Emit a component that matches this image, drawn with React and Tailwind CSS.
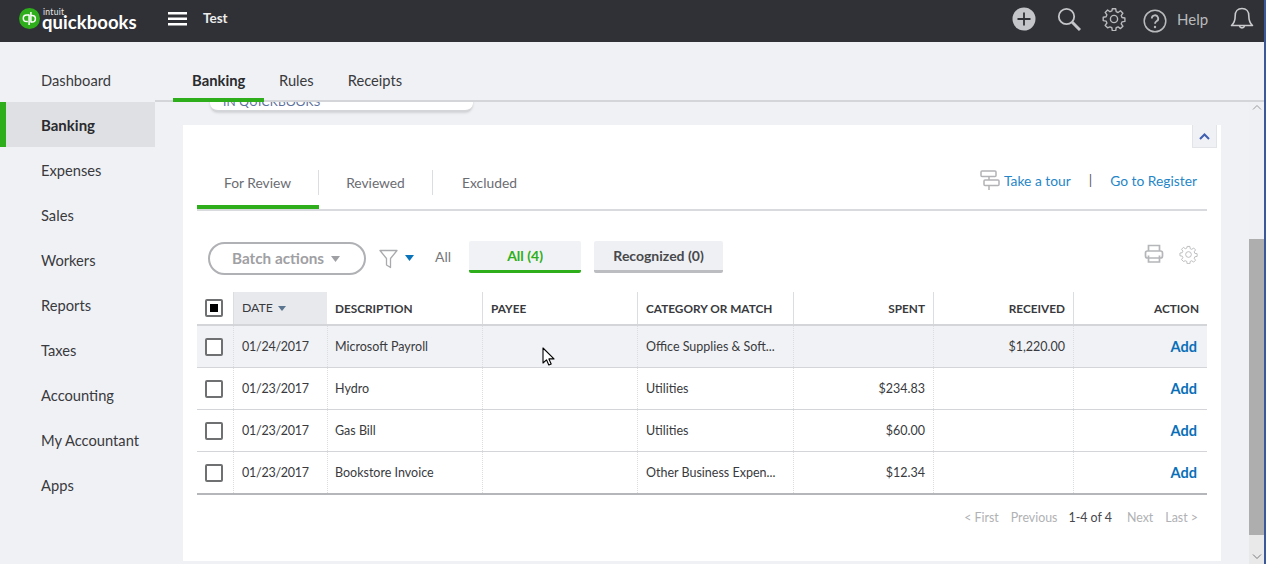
import React from "react";

const font = { fontFamily: "Lato, 'Open Sans', sans-serif" };
const cols = "grid grid-cols-[36px_94px_155px_155px_156px_140px_140px_134px]";
const navItems = ["Dashboard", "Banking", "Expenses", "Sales", "Workers", "Reports", "Taxes", "Accounting", "My Accountant", "Apps"];
const rows = [
  { date: "01/24/2017", desc: "Microsoft Payroll", cat: "Office Supplies & Soft...", spent: "", rec: "$1,220.00", hover: true },
  { date: "01/23/2017", desc: "Hydro", cat: "Utilities", spent: "$234.83", rec: "" },
  { date: "01/23/2017", desc: "Gas Bill", cat: "Utilities", spent: "$60.00", rec: "" },
  { date: "01/23/2017", desc: "Bookstore Invoice", cat: "Other Business Expen...", spent: "$12.34", rec: "" },
];

function Gear({ size = 24, color = "#b9babc", sw = 1.6 }) {
  return (
    <svg width={size} height={size} viewBox="0 0 24 24" fill="none" stroke={color} strokeWidth={sw} strokeLinejoin="round">
      <path d="M10.3 2h3.4l.5 2.9 1.9.8 2.4-1.7 2.4 2.4-1.7 2.4.8 1.9 2.9.5v3.4l-2.9.5-.8 1.9 1.7 2.4-2.4 2.4-2.4-1.7-1.9.8-.5 2.9h-3.4l-.5-2.9-1.9-.8L5.600 21l-2.400-2.400 1.700-2.400-.8-1.900L1.200 13.800v-3.400l2.900-.5.8-1.900L3.200 5.600l2.400-2.400 2.400 1.700 1.900-.8z" transform="translate(0 -.2)" />
      <circle cx="12" cy="12" r="3.600" />
    </svg>
  );
}

function Checkbox({ checked }) {
  return (
    <div className="w-[18px] h-[18px] border-2 border-[#6f7072] rounded-[2px] bg-white flex items-center justify-center">
      {checked && <div className="w-2 h-2 bg-black" />}
    </div>
  );
}

function Header() {
  return (
    <header className="h-[42px] bg-[#303136] flex items-center shrink-0 relative">
      <div className="ml-[19px] w-[21px] h-[21px] rounded-full bg-[#2eae1a] flex items-center justify-center mt-[-5px] shrink-0">
        <svg width="16" height="13" viewBox="0 0 16 13" fill="none" stroke="white" strokeWidth="1.500">
          <path d="M7.100 2.500V13M8.900 0v10.500" />
          <path d="M7.100 3H4.600a3.300 3.300 0 0 0 0 6.600h1.200M8.900 3.400h1.200a3.300 3.300 0 0 1 0 6.600H8.900" />
        </svg>
      </div>
      <div className="ml-[2px] w-[97px] h-[42px] relative text-white font-bold">
        <div className="text-[8.500px] leading-[8px] font-normal tracking-[0.3px] absolute left-[1px] top-[8px] text-[#e9e9e9]">intuit</div>
        <div className="text-[18.500px] leading-[13px] tracking-[0.05px] absolute left-0 top-[16px]">quickbooks</div>
      </div>
      <svg className="ml-[29px] mt-[-4px]" width="19" height="14" viewBox="0 0 19 14" fill="white">
        <rect y="0" width="19" height="2.500" />
        <rect y="5.500" width="19" height="2.500" />
        <rect y="11" width="19" height="2.500" />
      </svg>
      <span className="ml-[16px] text-[13.500px] font-bold text-[#ececec] mt-[-5px]">Test</span>

      <div className="ml-auto flex items-center text-[#b9babc] mr-[10px]">
        <svg width="24" height="24" viewBox="0 0 24 24" className="mt-[-4px]">
          <circle cx="12" cy="12" r="11.500" fill="#c3c5c9" />
          <path d="M12 5.500v13M5.500 12h13" stroke="#303136" strokeWidth="1.800" />
        </svg>
        <svg width="24" height="24" viewBox="0 0 24 24" fill="none" stroke="#c3c5c9" className="ml-[21px] mt-[-4px]">
          <circle cx="9.500" cy="9.500" r="7.700" strokeWidth="1.800" />
          <path d="M15 15l8 8" strokeWidth="3" />
        </svg>
        <div className="ml-[21px] mt-[-4px]"><Gear size={24} color="#b9babc" sw={1.400} /></div>
        <svg width="24" height="24" viewBox="0 0 24 24" fill="none" className="ml-[17px] mt-[-1px]">
          <circle cx="12" cy="12" r="10.800" stroke="#b9babc" strokeWidth="1.500" />
          <path d="M8.800 9.500a3.200 3.200 0 1 1 4.700 2.800c-1 .6-1.500 1.100-1.500 2.500" stroke="#b9babc" strokeWidth="1.800" />
          <circle cx="12" cy="18" r="1.200" fill="#b9babc" />
        </svg>
        <span className="ml-[10px] text-[15px] mt-[-3px] w-[32px]">Help</span>
        <svg width="24" height="25" viewBox="0 0 24 25" fill="none" stroke="#c9cacc" strokeWidth="1.600" strokeLinejoin="round" className="ml-[21px] mt-[-4px]">
          <path d="M12 1.500c-4.300 0-6.800 3-6.800 7.200 0 5-1.300 7.700-3.700 9.800h21c-2.400-2.100-3.700-4.800-3.700-9.800 0-4.200-2.500-7.200-6.800-7.200z" />
          <path d="M9.500 19a2.600 2.600 0 0 0 5 0" />
        </svg>
      </div>
    </header>
  );
}

function Sidebar() {
  return (
    <nav className="w-[155px] shrink-0 pt-[15px] text-[14.700px] text-[#393a3d]">
      {navItems.map((item) => (
        <div
          key={item}
          className={
            item === "Banking"
              ? "h-[45px] flex items-center pt-[2px] pl-[35px] bg-[#dfe0e4] border-l-[6px] border-[#2eae1a] font-bold text-[15px] text-[#2a2b2e]"
              : "h-[45px] flex items-center pt-[2px] pl-[41px]"
          }
        >
          {item}
        </div>
      ))}
    </nav>
  );
}

function Table() {
  return (
    <div className="mx-[14px] mt-[17px] text-[12.500px] text-[#393a3d]">
      <div className={`${cols} h-[34px] border-b-2 border-[#d4d5d8] font-bold text-[11.800px] text-[#393a3d] items-stretch`}>
        <div className="flex items-center pl-[8px]"><Checkbox checked /></div>
        <div className="bg-[#e8e9ed] border-l border-[#dcdde0] flex items-center pl-[8px] font-normal text-[12.300px] gap-[5px]">
          DATE
          <svg width="8" height="5" viewBox="0 0 8 5"><path d="M0 0h8L4 5z" fill="#5b7590" /></svg>
        </div>
        <div className="flex items-center pl-[8px] pt-[1px]">DESCRIPTION</div>
        <div className="flex items-center pl-[8px] pt-[1px] border-l border-[#dcdde0]">PAYEE</div>
        <div className="flex items-center pl-[8px] pt-[1px] border-l border-[#dcdde0]">CATEGORY OR MATCH</div>
        <div className="flex items-center justify-end pr-[8px] pt-[1px] border-l border-[#dcdde0]">SPENT</div>
        <div className="flex items-center justify-end pr-[8px] pt-[1px] border-l border-[#dcdde0]">RECEIVED</div>
        <div className="flex items-center justify-end pr-[8px] pt-[1px] border-l border-[#dcdde0]">ACTION</div>
      </div>
      {rows.map((r, i) => (
        <div
          key={i}
          className={`${cols} h-[42px] border-b ${i === 3 ? "border-b-2 border-[#b5b6b9] h-[43px]" : "border-[#d4d5d8]"} ${r.hover ? "bg-[#f1f2f5]" : ""}`}
        >
          <div className="flex items-center pl-[8px]"><Checkbox /></div>
          <div className="flex items-center pl-[8px] pt-[1px] border-l border-dotted border-[#dcdde0] tracking-[-0.25px]">{r.date}</div>
          <div className="flex items-center pl-[7px] pt-[1px] border-l border-dotted border-[#dcdde0]">{r.desc}</div>
          <div className="flex items-center pl-[8px] border-l border-dotted border-[#dcdde0]" />
          <div className="flex items-center pl-[8px] pt-[1px] border-l border-dotted border-[#dcdde0]">{r.cat}</div>
          <div className="flex items-center justify-end pr-[8px] pt-[1px] border-l border-dotted border-[#dcdde0]">{r.spent}</div>
          <div className="flex items-center justify-end pr-[8px] pt-[1px] border-l border-dotted border-[#dcdde0]">{r.rec}</div>
          <div className="flex items-center justify-end pr-[10px] border-l border-dotted border-[#dcdde0] text-[#0a6fb8] font-bold text-[14.500px]">Add</div>
        </div>
      ))}
    </div>
  );
}

function Card() {
  return (
    <section className="bg-white mt-[13px] ml-[28px] w-[1038px] h-[436px] relative">
      <div className="absolute right-[4px] top-0 w-[25px] h-[23px] bg-[#f0f1f5] border border-t-0 border-[#e3e4e7] flex items-center justify-center">
        <svg width="11" height="7" viewBox="0 0 11 7" fill="none" stroke="#3f5fb0" strokeWidth="2"><path d="M1 6l4.500-4.500L10 6" /></svg>
      </div>

      <div className="mx-[14px] pt-[45px] h-[86px] border-b-2 border-[#d9dadd] flex relative">
        <div className="w-[122px] h-[39px] border-b-[4px] border-[#2eae1a] text-center text-[#6b6c72] text-[13.800px]">
          <div className="h-[25px] border-r border-[#dcdde0] leading-[25px]">For Review</div>
        </div>
        <div className="w-[114px] text-center text-[#6b6c72] text-[13.800px]">
          <div className="h-[25px] border-r border-[#dcdde0] leading-[25px]">Reviewed</div>
        </div>
        <div className="w-[113px] text-center text-[#6b6c72] text-[13.800px] leading-[25px]">Excluded</div>
        <div className="ml-auto flex items-start text-[13.800px] text-[#2586c7] pr-[10px] mt-[-2px]">
          <svg width="20" height="20" viewBox="0 0 20 20" fill="none" stroke="#b2b3b6" strokeWidth="1.500" className="mt-[2px] mr-[4px]">
            <rect x="1" y="1" width="15" height="5.500" rx="1" />
            <rect x="4" y="10" width="15" height="5.500" rx="1" />
            <path d="M9 6.500V10M9 15.500V20" />
          </svg>
          <span className="leading-[25px]">Take a tour</span>
          <span className="text-[#5b5c60] ml-[18px] mr-[18px] leading-[23px]">|</span>
          <span className="leading-[25px]">Go to Register</span>
        </div>
      </div>

      <div className="mx-[25px] mt-[30px] h-[34px] flex items-start relative">
        <div className="w-[158px] h-[33px] mt-[1px] rounded-full border-2 border-[#b0b1b4] flex items-center pl-[22px] text-[#9fa0a3] font-bold text-[15.300px] gap-[7px]">
          Batch actions
          <svg width="9" height="6" viewBox="0 0 9 6"><path d="M0 0h9L4.500 6z" fill="#9fa0a3" /></svg>
        </div>
        <svg width="20" height="22" viewBox="0 0 20 22" fill="none" stroke="#a9aaad" strokeWidth="1.300" className="ml-[13px] mt-[7px]">
          <path d="M1 2.500h17l-6.500 8v9l-4-2.500v-6.500z" strokeLinejoin="round" />
        </svg>
        <svg width="9" height="6" viewBox="0 0 9 6" className="ml-[6px] mt-[14px]"><path d="M0 0h9L4.500 6z" fill="#0a74bb" /></svg>
        <span className="ml-[21px] mt-[5px] text-[14px] text-[#77787c]">All</span>
        <div className="ml-[18px] w-[112px] h-[32px] bg-[#f1f2f5] border-b-[3px] border-[#2eae1a] rounded-[2px] flex items-center justify-center text-[#2eae1a] font-bold text-[14px]">All (4)</div>
        <div className="ml-[13px] w-[129px] h-[32px] bg-[#eff0f3] border-b-[3px] border-[#bcbdc1] rounded-[2px] flex items-center justify-center text-[#47484c] font-bold text-[14px]">Recognized (0)</div>
        <div className="ml-auto flex items-center gap-[15px] mt-[3px] mr-[-2px]">
          <svg width="20" height="20" viewBox="0 0 20 20" fill="none" stroke="#b5b6b9" strokeWidth="1.700">
            <path d="M4.500 7V1.500h11V7" />
            <rect x="1.500" y="7" width="17" height="7" rx="2" />
            <path d="M4.500 11.500v6.500h11v-6.500" />
          </svg>
          <Gear size={19} sw={1.200} />
        </div>
      </div>

      <Table />

      <div className="mx-[14px] mt-[14px] pr-[9px] flex justify-end text-[12.400px] text-[#b0b1b4]">
        <span>&lt; First</span>
        <span className="ml-[12px]">Previous</span>
        <span className="ml-[11px] text-[#47484c]">1-4 of 4</span>
        <span className="ml-[15px]">Next</span>
        <span className="ml-[12px]">Last &gt;</span>
      </div>
    </section>
  );
}

function Scrollbar() {
  return (
    <div className="w-[15px] h-full bg-[#e9e9ea] flex flex-col shrink-0">
      <div className="h-[137px] pt-[2px] pl-[3px] bg-[#eff0f3]">
        <svg width="10" height="6" viewBox="0 0 10 6" fill="none" stroke="#9a9a9c"><path d="M1 5.500l4-4 4 4" /></svg>
      </div>
      <div className="flex-1 bg-[#aeaeae]" />
      <div className="h-[29px] flex items-end pb-[4px] pl-[3px]">
        <svg width="10" height="6" viewBox="0 0 10 6" fill="none" stroke="#7a7a7c"><path d="M1 .5l4 4 4-4" /></svg>
      </div>
    </div>
  );
}

export default function App() {
  return (
    <div style={font} className="w-[1266px] h-[564px] overflow-hidden bg-[#f0f1f5] flex flex-col border-r-2 border-[#3b5998]">
      <Header />
      <div className="flex flex-1 min-h-0">
        <Sidebar />
        <main className="flex-1 min-w-0 flex flex-col">
          <div className="h-[60px] shrink-0 border-b-2 border-[#d4d5d8] flex pl-[18px] text-[14.700px] text-[#393a3d] relative">
            <div className="w-[91px] h-[60px] pl-[19px] pt-[27px] border-b-[4px] border-[#2eae1a] font-bold text-[14.800px] text-[#2a2b2e] relative z-10">Banking</div>
            <div className="ml-[15px] pt-[27px]">Rules</div>
            <div className="ml-[34px] pt-[27px]">Receipts</div>
          </div>
          <div className="flex flex-1 min-h-0">
            <div className="flex-1 min-w-0 overflow-hidden relative">
              <div className="absolute left-[55px] top-[-8px] w-[263px] h-[18px] bg-white rounded-b-[8px] border-b-2 border-[#d4d5d8] shadow-sm overflow-hidden">
                <span className="absolute left-[13px] top-[-1px] text-[12px] text-[#5c6f9c] tracking-[0.2px]">IN QUICKBOOKS</span>
              </div>
              <div className="h-[10px]" />
              <Card />
            </div>
            <Scrollbar />
          </div>
        </main>
      </div>
      <svg className="absolute left-[542px] top-[347px]" width="14" height="20" viewBox="0 0 14 20">
        <path d="M1 1v15l3.500-3.200 2.300 5.200 2.400-1-2.300-5.100H12z" fill="white" stroke="black" strokeWidth="1.100" strokeLinejoin="round" />
      </svg>
    </div>
  );
}
